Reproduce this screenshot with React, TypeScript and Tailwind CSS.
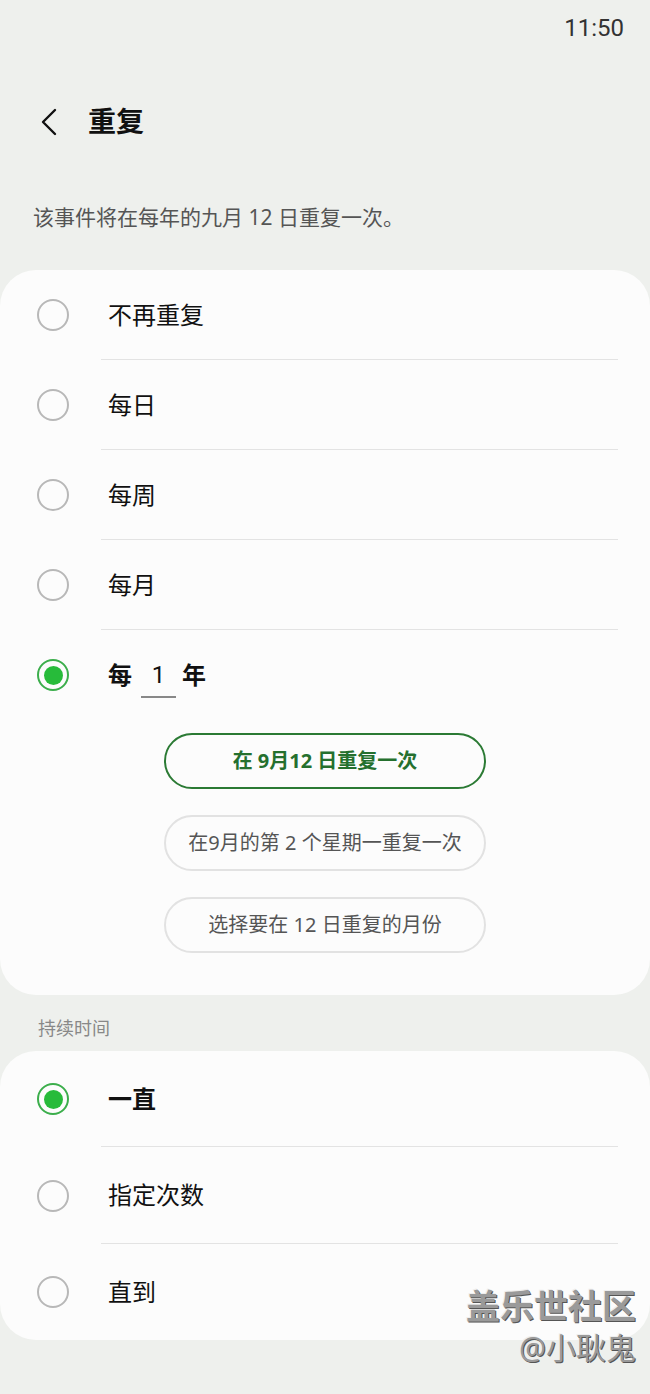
import React from "react";

const font = { fontFamily: '"Noto Sans", "Noto Sans CJK SC", sans-serif' };

function Radio({ on }: { on?: boolean }) {
  return on ? (
    <div className="w-[32px] h-[32px] rounded-full border-2 border-[#3cae4c] flex items-center justify-center shrink-0">
      <div className="w-[19px] h-[19px] rounded-full bg-[#27bb3a]" />
    </div>
  ) : (
    <div className="w-[32px] h-[32px] rounded-full border-2 border-[#b8b8b8] shrink-0" />
  );
}

function Row({
  label,
  on,
  bold,
  divider,
  h,
  children,
}: {
  label?: string;
  on?: boolean;
  bold?: boolean;
  divider?: boolean;
  h: string;
  children?: React.ReactNode;
}) {
  return (
    <div className={`flex items-center ${h} relative`}>
      <div className="w-[101px] pl-[37px] flex items-center">
        <Radio on={on} />
      </div>
      <div className={`flex-1 flex items-center h-full pl-[7px] mr-[32px] ${divider ? "border-b border-[#e3e3e3]" : ""}`}>
        {children ?? (
          <span className={`text-[24px] text-[#111] ${bold ? "font-bold" : ""}`}>{label}</span>
        )}
      </div>
    </div>
  );
}

export default function App() {
  return (
    <div className="w-[650px] h-[1394px] bg-[#eef0ed] relative overflow-hidden" style={font}>
      <div className="h-[56px] flex items-center justify-end pr-[26px]">
        <span className="text-[24px] text-[#333]" style={{ fontFamily: "Roboto, sans-serif" }}>11:50</span>
      </div>
      <div className="h-[132px] flex items-center pl-[36px] pb-[2px]">
        <svg width="26" height="34" viewBox="0 0 26 34" className="mt-[1px]">
          <path d="M19 5 L7 17 L19 29" fill="none" stroke="#111" strokeWidth="2.4" strokeLinecap="round" strokeLinejoin="round" />
        </svg>
        <span className="ml-[26px] text-[28px] font-bold text-[#111]">重复</span>
      </div>
      <div className="h-[58px] pl-[33px] flex items-center pt-[2px]">
        <span className="text-[21px] text-[#555]">该事件将在每年的九月 12 日重复一次。</span>
      </div>
      <div className="h-[24px]" />
      <div className="bg-[#fcfcfc] rounded-[36px] pb-[42px]">
        <Row h="h-[90px]" label="不再重复" divider />
        <Row h="h-[90px]" label="每日" divider />
        <Row h="h-[90px]" label="每周" divider />
        <Row h="h-[90px]" label="每月" divider />
        <Row h="h-[90px]" on>
          <div className="flex items-center text-[24px] font-bold text-[#111]">
            <span>每</span>
            <span className="ml-[9px] w-[35px] text-center relative font-normal text-[24px]" style={{ fontFamily: "Roboto, sans-serif" }}>
              1
              <span className="absolute left-0 right-0 top-[39px] h-[1.5px] bg-[#888]" />
            </span>
            <span className="ml-[6px]">年</span>
          </div>
        </Row>
        <div className="flex flex-col items-start pl-[164px] gap-[26px] mt-[13px]">
          <div className="w-[322px] h-[56px] rounded-full border-2 border-[#2b7a34] flex items-center justify-center">
            <span className="text-[20px] font-bold text-[#25702e]">在 9月12 日重复一次</span>
          </div>
          <div className="w-[322px] h-[56px] rounded-full border-2 border-[#e2e2e2] flex items-center justify-center">
            <span className="text-[20px] text-[#555]">在9月的第 2 个星期一重复一次</span>
          </div>
          <div className="w-[322px] h-[56px] rounded-full border-2 border-[#e2e2e2] flex items-center justify-center">
            <span className="text-[20px] text-[#555]">选择要在 12 日重复的月份</span>
          </div>
        </div>
      </div>
      <div className="h-[56px] pl-[38px] flex items-center pt-[10px]">
        <span className="text-[18px] text-[#888]">持续时间</span>
      </div>
      <div className="bg-[#fcfcfc] rounded-[36px]">
        <Row h="h-[96px]" label="一直" on bold divider />
        <Row h="h-[97px]" label="指定次数" divider />
        <Row h="h-[96px]" label="直到" />
      </div>
      <div className="absolute right-[14px] top-[1289px] flex flex-col items-end leading-none">
        <span className="text-[34px] font-bold text-[#9a9a9a]" style={{ textShadow: "1px 1px 0 #555, -1px -1px 0 #eee" }}>盖乐世社区</span>
        <span className="mt-[10px] text-[30px] text-[#9a9a9a]" style={{ textShadow: "1px 1px 0 #555, -1px -1px 0 #eee" }}>@小耿鬼</span>
      </div>
    </div>
  );
}
